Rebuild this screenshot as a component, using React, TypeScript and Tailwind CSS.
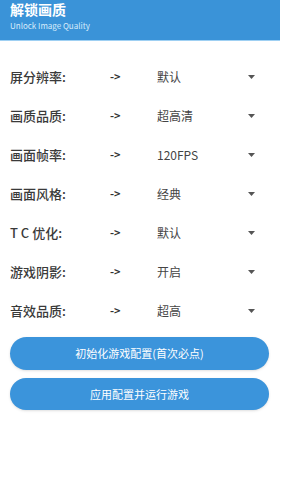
import React from 'react';

const rows = [
  { label: '屏分辨率:', value: '默认' },
  { label: '画质品质:', value: '超高清' },
  { label: '画面帧率:', value: '120FPS' },
  { label: '画面风格:', value: '经典' },
  { label: 'T C 优化:', value: '默认' },
  { label: '游戏阴影:', value: '开启' },
  { label: '音效品质:', value: '超高' },
];

const App: React.FC = () => {
  return (
    <div
      className="w-[284px] h-[480px] bg-white overflow-hidden"
      style={{ fontFamily: '"Noto Sans CJK SC", "Noto Sans", sans-serif' }}
    >
      {/* Header */}
      <div className="w-[280px] h-[41px] bg-[#3a93d8] pl-[10px] pt-0 border-b border-[#9fd0f3]">
        <div className="text-white text-[14px] font-bold leading-[16px] pt-[1px]">解锁画质</div>
        <div className="text-[#d8ecfb] text-[8px] leading-[10px] mt-[4px]">Unlock Image Quality</div>
      </div>

      {/* Settings */}
      <div className="flex flex-col pt-[16px]">
        {rows.map((r) => (
          <div key={r.label} className="flex items-center h-[39px] leading-none pl-[10px]">
            <div className="w-[100px] text-[13px] text-[#3a3a3a] font-medium">{r.label}</div>
            <div className="w-[47px] text-[11px] text-[#333] font-bold">-&gt;</div>
            <div className="w-[90px] text-[12px] text-[#444]">{r.value}</div>
            <svg width="7" height="4" viewBox="0 0 7 4" className="ml-[1px]">
              <path d="M0 0 L7 0 L3.5 4 Z" fill="#555" />
            </svg>
          </div>
        ))}
      </div>

      {/* Buttons */}
      <div className="flex flex-col gap-[8px] px-[10px] mt-[7px] w-[279px]">
        <button className="h-[33px] rounded-full bg-[#3b94db] text-white text-[11px] shadow-sm">
          初始化游戏配置(首次必点)
        </button>
        <button className="h-[32px] rounded-full bg-[#3b94db] text-white text-[11px] shadow-sm">
          应用配置并运行游戏
        </button>
      </div>
    </div>
  );
};

export default App;
